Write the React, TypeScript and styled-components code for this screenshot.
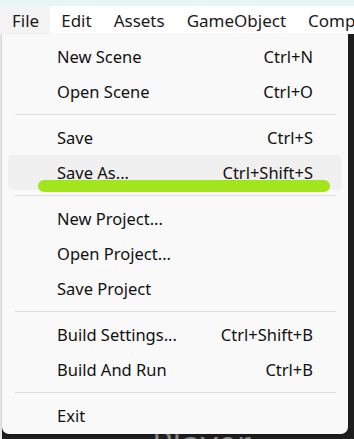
import React from "react"
import styled, { createGlobalStyle } from "styled-components"

const GlobalStyle = createGlobalStyle`
  html, body {
    margin: 0;
    padding: 0;
    width: 354px;
    height: 439px;
    overflow: hidden;
    background: #1e1e1e;
  }
  body {
    font-family: "Noto Sans", "Open Sans", sans-serif;
  }
`

type Entry = { label: string; shortcut?: string; hover?: boolean; marked?: boolean } | "sep"

const entries: Entry[] = [
  { label: "New Scene", shortcut: "Ctrl+N" },
  { label: "Open Scene", shortcut: "Ctrl+O" },
  "sep",
  { label: "Save", shortcut: "Ctrl+S" },
  { label: "Save As...", shortcut: "Ctrl+Shift+S", hover: true, marked: true },
  "sep",
  { label: "New Project..." },
  { label: "Open Project..." },
  { label: "Save Project" },
  "sep",
  { label: "Build Settings...", shortcut: "Ctrl+Shift+B" },
  { label: "Build And Run", shortcut: "Ctrl+B" },
  "sep",
  { label: "Exit" },
]

const menus = ["File", "Edit", "Assets", "GameObject", "Component"]

export default function App() {
  return (
    <Page>
      <GlobalStyle />
      <TitleStrip />
      <MenuBar>
        {menus.map((m, i) => (
          <MenuTitle key={m} $open={i === 0}>
            {m}
          </MenuTitle>
        ))}
      </MenuBar>
      <Workspace>
        <Dropdown>
          {entries.map((e, i) =>
            e === "sep" ? (
              <Separator key={i} />
            ) : (
              <Item key={i} $hover={e.hover}>
                <span>{e.label}</span>
                {e.shortcut && <Shortcut>{e.shortcut}</Shortcut>}
                {e.marked && <Marker />}
              </Item>
            )
          )}
        </Dropdown>
        <BackText>Player</BackText>
      </Workspace>
    </Page>
  )
}

const Page = styled.div`
  display: flex;
  flex-direction: column;
  width: 354px;
  height: 439px;
  overflow: hidden;
`

const TitleStrip = styled.div`
  height: 6px;
  background: #e6f6f4;
`

const MenuBar = styled.div`
  display: flex;
  height: 28px;
  background: #ffffff;
  white-space: nowrap;
  overflow: hidden;
`

const MenuTitle = styled.div<{ $open?: boolean }>`
  display: flex;
  align-items: center;
  padding: 0 11px 0 11px;
  font-size: 17px;
  color: #1a1a1a;
  background: ${(p) => (p.$open ? "#f3f3f3" : "transparent")};

  &:first-child {
    padding-left: 12px;
  }
`

const Workspace = styled.div`
  position: relative;
  flex: 1;
  display: flex;
  flex-direction: column;
  padding-left: 2px;
  background: #1e1e1e;
  box-shadow: inset 2px 0 0 #e9e9e9;
`

const Dropdown = styled.div`
  position: relative;
  z-index: 1;
  width: 346px;
  box-sizing: border-box;
  padding: 5px 6px 1px 6px;
  background: #f9f9f9;
  border-radius: 0 0 7px 7px;
  box-shadow: 0 1px 2px rgba(0, 0, 0, 0.3);
`

const Item = styled.div<{ $hover?: boolean }>`
  position: relative;
  display: flex;
  align-items: center;
  justify-content: space-between;
  height: 35px;
  padding: 0 29px 0 49px;
  border-radius: 5px;
  font-size: 16.5px;
  color: #111111;
  background: ${(p) => (p.$hover ? "#f0f0f0" : "transparent")};
`

const Shortcut = styled.span`
  color: #111111;
`

const Marker = styled.div`
  position: absolute;
  left: 30px;
  right: 12px;
  bottom: -2px;
  height: 12px;
  border-radius: 6px;
  background: #a3e51c;
`

const Separator = styled.div`
  height: 1px;
  margin: 5px 6px 5px 7px;
  background: #dfdfdf;
`

const BackText = styled.div`
  position: absolute;
  left: 152px;
  top: 386px;
  font-size: 34px;
  color: #8a8a8a;
`
